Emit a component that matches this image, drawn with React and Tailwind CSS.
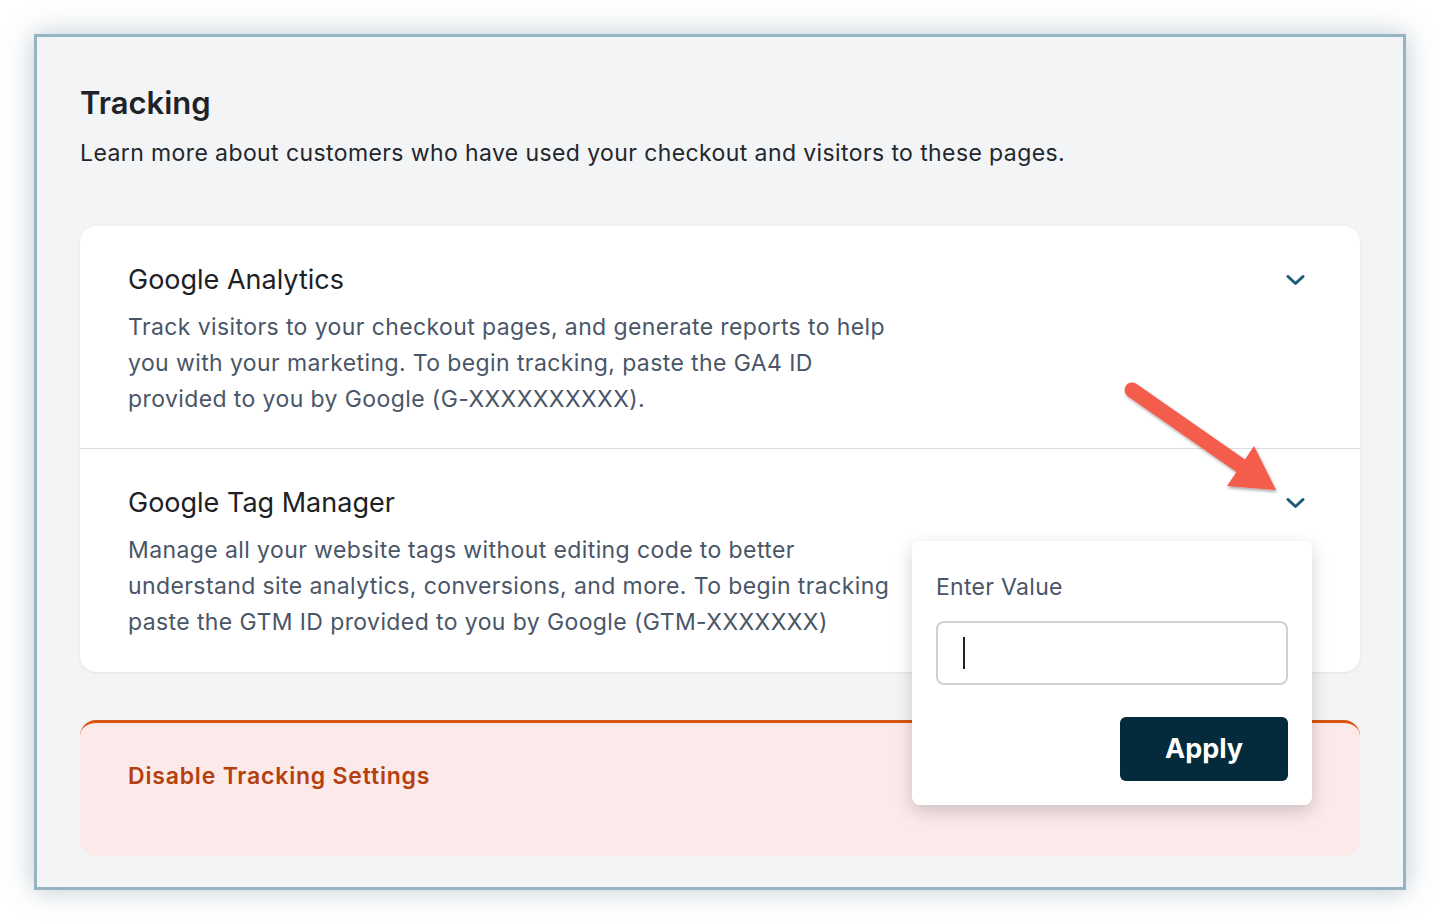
import React from 'react';

const Chevron = () => (
  <svg width="20" height="14" viewBox="0 0 20 14" fill="none" className="shrink-0">
    <path d="M3 3.5 L10.5 10.5 L18 3.5" stroke="#1d5a7a" strokeWidth="3" strokeLinecap="round" strokeLinejoin="round" />
  </svg>
);

const Section = ({ title, children, border }) => (
  <div className={`relative h-[223px] pl-12 pr-[55px] pt-[34px] ${border ? 'border-b border-[#dcdcdc]' : ''}`}>
    <div className="flex items-center justify-between">
      <h3 className="text-[27px] leading-[40px] text-[#1d2125]">{title}</h3>
      <Chevron />
    </div>
    <p className="mt-[9px] max-w-[775px] text-[23px] leading-[36px] tracking-[0.4px] text-[#4a5667]">{children}</p>
  </div>
);

const PointerArrow = () => (
  <svg className="absolute left-[1085px] top-[338px]" width="220" height="180" viewBox="0 0 220 180" fill="none">
    <defs>
      <filter id="arrow-shadow" x="-20%" y="-20%" width="140%" height="140%">
        <feDropShadow dx="1" dy="2" stdDeviation="1.5" floodColor="#000" floodOpacity="0.35" />
      </filter>
    </defs>
    <g filter="url(#arrow-shadow)">
      <line x1="10" y1="15" x2="122" y2="93" stroke="#f45b4c" strokeWidth="15" strokeLinecap="round" />
      <polygon points="132,71 154,115 105,111" fill="#f45b4c" />
    </g>
  </svg>
);

export default function App() {
  return (
    <div className="min-h-screen bg-white pt-[34px] pl-[34px] font-['Inter','Liberation_Sans',sans-serif]">
      <div className="relative w-[1372px] h-[856px] border-[3px] border-[#95b4c4] bg-[#f3f4f6] shadow-[0_0_26px_rgba(70,100,120,0.35)] px-[43px] pt-[46px]">
        <h1 className="text-[31px] leading-[40px] font-semibold text-[#1f2328]">Tracking</h1>
        <p className="mt-[14px] text-[23px] leading-[32px] tracking-[0.4px] text-[#23272d]">
          Learn more about customers who have used your checkout and visitors to these pages.
        </p>

        <div className="mt-[57px] w-[1280px] rounded-2xl bg-white shadow-[0_1px_3px_rgba(0,0,0,0.08)]">
          <Section title="Google Analytics" border>
            Track visitors to your checkout pages, and generate reports to help you with your marketing. To begin tracking, paste the GA4 ID provided to you by Google (G-XXXXXXXXXX).
          </Section>
          <Section title="Google Tag Manager">
            Manage all your website tags without editing code to better understand site analytics, conversions, and more. To begin tracking paste the GTM ID provided to you by Google (GTM-XXXXXXX)
          </Section>
        </div>

        <div className="mt-[48px] w-[1280px] h-[136px] rounded-2xl border-t-[3px] border-[#d9540f] bg-[#fce9ea] pl-12 pt-[37px]">
          <span className="text-[23px] leading-[32px] font-semibold tracking-[0.8px] text-[#b5400d]">Disable Tracking Settings</span>
        </div>

        <PointerArrow />

        <div className="absolute left-[875px] top-[504px] w-[400px] h-[264px] rounded-lg bg-white px-6 pt-[30px] shadow-[0_6px_18px_rgba(0,0,0,0.18)]">
          <label className="block text-[23px] leading-[32px] tracking-[0.3px] text-[#4a5667]">Enter Value</label>
          <div className="mt-[18px] flex h-[64px] w-[352px] items-center rounded-lg border-2 border-[#d1d1d4] pl-[25px]">
            <span className="block h-[32px] w-[2px] bg-[#1f2328]" />
          </div>
          <div className="mt-[32px] flex justify-end">
            <button className="h-[64px] w-[168px] rounded-md bg-[#032b3b] text-[27px] font-bold text-white">Apply</button>
          </div>
        </div>
      </div>
    </div>
  );
}
